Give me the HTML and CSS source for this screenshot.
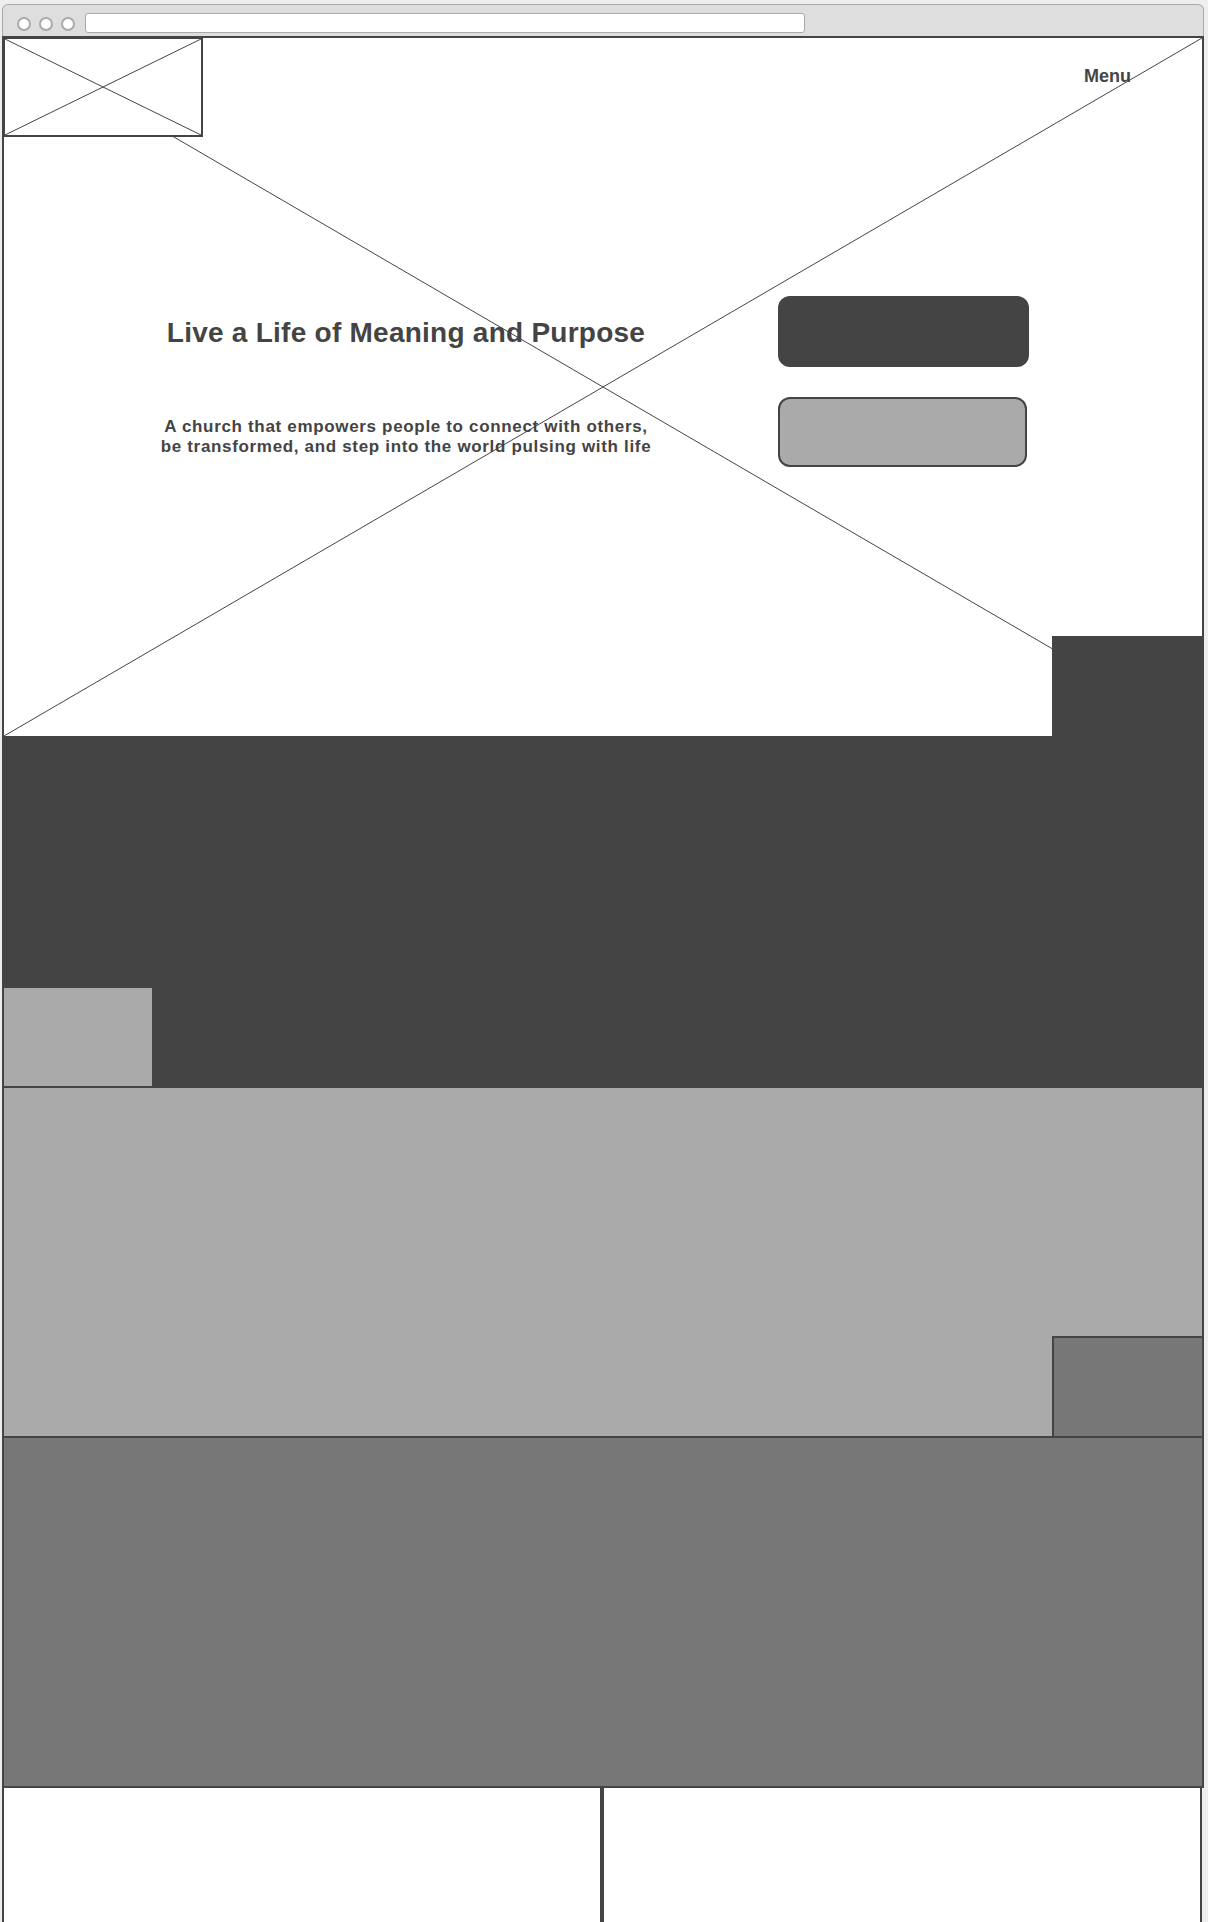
FILE: index.html
```html
<!DOCTYPE html>
<html lang="en">
<head>
    <meta charset="UTF-8">
    <meta name="viewport" content="width=device-width, initial-scale=1.0">
    <title>Church - Home</title>
    <link rel="stylesheet" href="styles.css">
</head>
<body>
    <div class="window">
        <div class="chrome">
            <span class="dot"></span>
            <span class="dot"></span>
            <span class="dot"></span>
            <div class="address"></div>
        </div>
        <div class="frame">
            <section class="hero">
                <svg class="placeholder" viewBox="0 0 100 100" preserveAspectRatio="none">
                    <line x1="0" y1="0" x2="100" y2="100" vector-effect="non-scaling-stroke"/>
                    <line x1="100" y1="0" x2="0" y2="100" vector-effect="non-scaling-stroke"/>
                </svg>
                <header class="top">
                    <div class="logo">
                        <svg viewBox="0 0 100 100" preserveAspectRatio="none">
                            <line x1="0" y1="0" x2="100" y2="100" vector-effect="non-scaling-stroke"/>
                            <line x1="100" y1="0" x2="0" y2="100" vector-effect="non-scaling-stroke"/>
                        </svg>
                    </div>
                    <a class="menu" href="#">Menu</a>
                </header>
                <div class="intro">
                    <div class="intro-text">
                        <h1>Live a Life of Meaning and Purpose</h1>
                        <p>A church that empowers people to connect with others,<br>be transformed, and step into the world pulsing with life</p>
                    </div>
                    <div class="actions">
                        <a class="btn btn-dark" href="#"></a>
                        <a class="btn btn-light" href="#"></a>
                    </div>
                </div>
                <div class="tab tab-dark"></div>
            </section>
            <section class="band band-dark">
                <div class="tab tab-light"></div>
            </section>
            <section class="band band-light">
                <div class="tab tab-mid"></div>
            </section>
            <section class="band band-mid"></section>
        </div>
        <div class="cards">
            <div class="card"></div>
            <div class="card"></div>
        </div>
    </div>
</body>
</html>
```

FILE: styles.css
```css
* { box-sizing: border-box; }
body { margin: 0; background: #eeeeee; color: #444444; font-family: "Liberation Sans", Arial, sans-serif; }

.window { width: 1202px; margin: 4px 0 0 2px; }

.chrome { display: flex; align-items: flex-start; height: 32px; padding: 8px 0 0 14px; background: #dedede; border: 1px solid #aaaaaa; border-bottom: none; border-radius: 6px 6px 0 0; }
.dot { width: 14px; height: 14px; margin: 4px 8px 0 0; background: #ffffff; border: 2px solid #aaaaaa; border-radius: 50%; }
.address { width: 720px; height: 20px; margin-left: 2px; background: #ffffff; border: 1px solid #aaaaaa; border-radius: 3px; }

.frame { border: 2px solid #444444; border-bottom: none; }

.hero { position: relative; display: flex; flex-direction: column; height: 698px; background: #ffffff; }
.placeholder { position: absolute; top: 0; left: 0; width: 100%; height: 100%; }
.placeholder line, .logo line { stroke: #444444; stroke-width: 1; }

.top { position: relative; display: flex; justify-content: space-between; align-items: flex-start; height: 99px; }
.logo { width: 200px; height: 100px; margin: -1px 0 0 -1px; background: #ffffff; border: 2px solid #444444; }
.logo svg { display: block; width: 100%; height: 100%; }
.menu { margin: 28px 71px 0 0; font-size: 18px; line-height: 21px; font-weight: bold; color: #444444; text-decoration: none; }

.intro { position: relative; display: flex; gap: 72px; margin-top: 159px; padding-left: 102px; }
.intro-text { width: 600px; padding-top: 21px; text-align: center; }
.intro-text h1 { margin: 0; font-size: 28px; line-height: 32px; font-weight: bold; letter-spacing: 0.25px; }
.intro-text p { margin: 68px 0 0; font-size: 17px; line-height: 20px; font-weight: bold; letter-spacing: 0.67px; }

.actions { display: flex; flex-direction: column; gap: 30px; }
.btn { display: block; border-radius: 12px; }
.btn-dark { width: 251px; height: 71px; background: #444444; }
.btn-light { width: 249px; height: 70px; background: #aaaaaa; border: 2px solid #444444; }

.tab { position: relative; }
.tab-dark { align-self: flex-end; width: 150px; height: 100px; margin-top: auto; background: #444444; }

.band { display: flex; flex-direction: column; }
.band-dark { height: 350px; background: #444444; }
.tab-light { width: 148px; height: 98px; margin-top: auto; background: #aaaaaa; }
.band-light { height: 350px; background: #aaaaaa; border-top: 2px solid #444444; }
.tab-mid { align-self: flex-end; width: 150px; height: 100px; margin-top: auto; background: #777777; border-top: 2px solid #444444; border-left: 2px solid #444444; }
.band-mid { height: 352px; background: #777777; border-top: 2px solid #444444; border-bottom: 2px solid #444444; }

.cards { display: grid; grid-template-columns: 600px 600px; }
.card { height: 200px; background: #ffffff; border: 2px solid #444444; border-top: none; }
```
